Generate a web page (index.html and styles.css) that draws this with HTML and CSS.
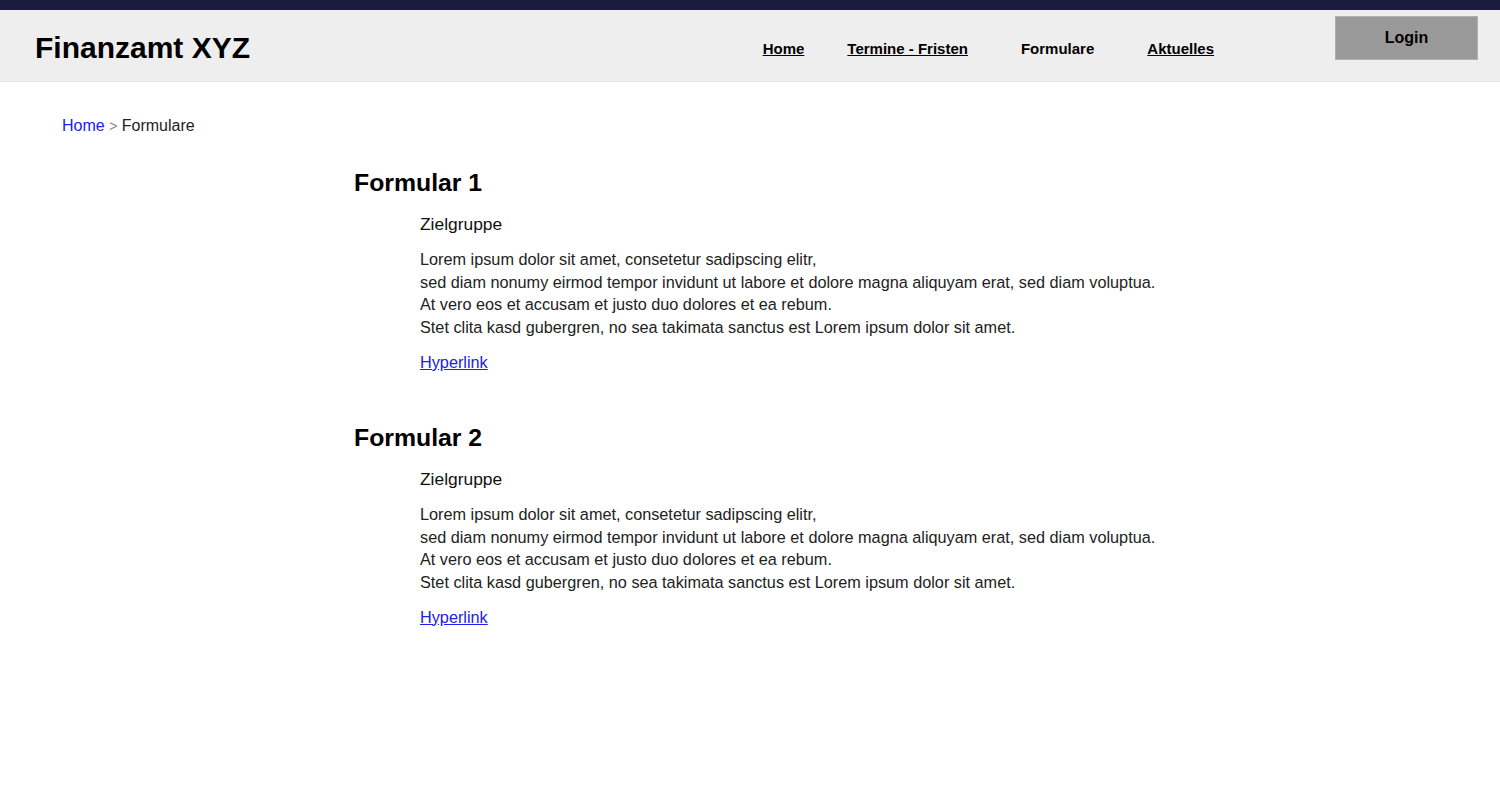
FILE: index.html
```html
<!DOCTYPE html>
<html lang="de">
<head>
<meta charset="utf-8">
<title>Finanzamt XYZ - Formulare</title>
<link rel="stylesheet" href="styles.css">
</head>
<body>
<header class="header">
  <div class="brand">Finanzamt XYZ</div>
  <nav class="nav">
    <a class="nav-link" href="#">Home</a>
    <a class="nav-link nav-second" href="#">Termine - Fristen</a>
    <a class="nav-link nav-current" href="#">Formulare</a>
    <a class="nav-link" href="#">Aktuelles</a>
  </nav>
  <button class="login">Login</button>
</header>
<main class="main">
  <div class="breadcrumb"><a href="#" class="crumb-link">Home</a> <span class="crumb-sep">&gt;</span> Formulare</div>
  <section class="form-section">
    <h2 class="form-title">Formular 1</h2>
    <div class="form-body">
      <h3 class="target">Zielgruppe</h3>
      <p class="desc">Lorem ipsum dolor sit amet, consetetur sadipscing elitr,<br>sed diam nonumy eirmod tempor invidunt ut labore et dolore magna aliquyam erat, sed diam voluptua.<br>At vero eos et accusam et justo duo dolores et ea rebum.<br>Stet clita kasd gubergren, no sea takimata sanctus est Lorem ipsum dolor sit amet.</p>
      <a class="hyper" href="#">Hyperlink</a>
    </div>
  </section>
  <section class="form-section">
    <h2 class="form-title">Formular 2</h2>
    <div class="form-body">
      <h3 class="target">Zielgruppe</h3>
      <p class="desc">Lorem ipsum dolor sit amet, consetetur sadipscing elitr,<br>sed diam nonumy eirmod tempor invidunt ut labore et dolore magna aliquyam erat, sed diam voluptua.<br>At vero eos et accusam et justo duo dolores et ea rebum.<br>Stet clita kasd gubergren, no sea takimata sanctus est Lorem ipsum dolor sit amet.</p>
      <a class="hyper" href="#">Hyperlink</a>
    </div>
  </section>
</main>
</body>
</html>
```
FILE: styles.css
```css
* { box-sizing: border-box; }
body {
  margin: 0;
  font-family: "Liberation Sans", Arial, sans-serif;
  color: #222;
  background: #fff;
}
.header {
  display: flex;
  align-items: flex-start;
  height: 82px;
  border-top: 10px solid #1a1a3f;
  background: #eeeeee;
  border-bottom: 1px solid #e4e4e4;
  padding: 0 22px 0 35px;
}
.brand {
  font-size: 30px;
  font-weight: bold;
  color: #000;
  margin-top: 21px;
  line-height: 34px;
}
.nav {
  display: flex;
  margin-left: auto;
  margin-top: 30px;
  margin-right: 121px;
}
.nav-link {
  font-size: 15px;
  font-weight: bold;
  color: #000;
  line-height: 18px;
  margin-left: 53px;
}
.nav-link:first-child { margin-left: 0; }
.nav-second { margin-left: 43px; }
.nav-current { text-decoration: none; }
.login {
  margin-top: 6px;
  width: 143px;
  height: 44px;
  background: #999999;
  border: 1px solid #b0b0b0;
  font-family: "Liberation Sans", Arial, sans-serif;
  font-size: 16px;
  font-weight: bold;
  color: #000;
  padding: 0 0 1px;
}
.main {
  padding: 35px 0 0 62px;
}
.breadcrumb {
  font-size: 16px;
  line-height: 18px;
  color: #222;
}
.crumb-link { color: #2020ee; text-decoration: none; }
.crumb-sep { color: #888; font-size: 14px; }
.form-section {
  margin-left: 292px;
  margin-bottom: 52px;
}
.breadcrumb + .form-section { margin-top: 34px; }
.form-title {
  margin: 0;
  font-size: 24.8px;
  line-height: 28px;
  color: #000;
}
.form-body {
  padding-left: 66px;
}
.target {
  margin: 17px 0 0;
  font-size: 17.4px;
  font-weight: normal;
  line-height: 20px;
  color: #111;
}
.desc {
  margin: 14px 0 0;
  font-size: 16.25px;
  line-height: 22.7px;
}
.hyper {
  display: inline-block;
  margin-top: 14px;
  font-size: 16.25px;
  line-height: 18px;
  color: #2020ee;
}
```
